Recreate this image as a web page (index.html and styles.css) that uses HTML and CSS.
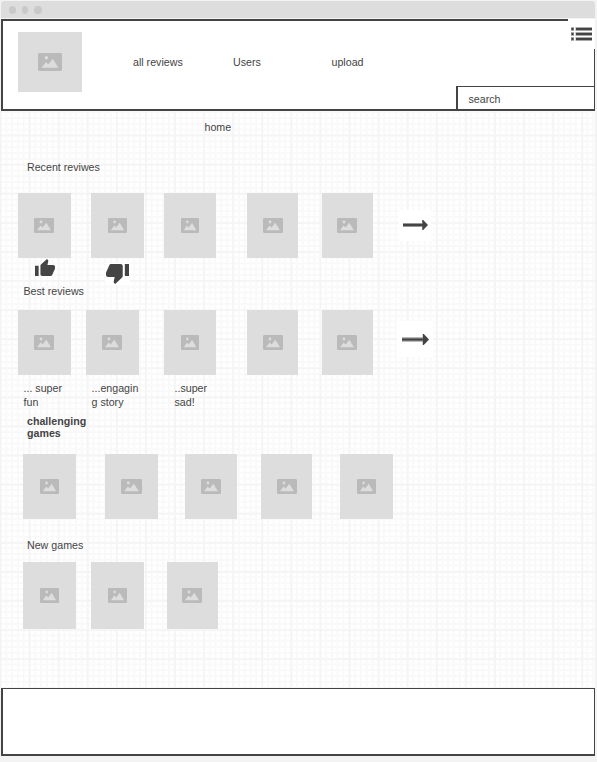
FILE: index.html
```html
<!DOCTYPE html>
<html lang="en">
<head>
<meta charset="utf-8">
<title>Game reviews</title>
<link rel="stylesheet" href="styles.css">
</head>
<body>
<svg class="defs" aria-hidden="true">
  <symbol id="pic" viewBox="0 0 20 15" preserveAspectRatio="none">
    <rect width="20" height="15" rx="1.2" fill="#bababa"/>
    <circle cx="7" cy="4" r="1.4" fill="#dddddd"/>
    <path d="M3 12.3 6.6 7.4 8.6 9.6 12.3 4.8 17 12.3z" fill="#dddddd"/>
  </symbol>
  <symbol id="thumb" viewBox="1 1 22 20" preserveAspectRatio="none">
    <path fill="#444" d="M1 21h4V9H1v12zm22-11c0-1.1-.9-2-2-2h-6.310l.95-4.570.03-.32c0-.41-.17-.79-.44-1.060L14.170 1 7.590 7.590C7.220 7.950 7 8.450 7 9v10c0 1.100.9 2 2 2h9c.83 0 1.540-.5 1.840-1.220l3.020-7.050c.09-.23.14-.47.14-.73v-2z"/>
  </symbol>
  <symbol id="arrow" viewBox="0 0 26 12" preserveAspectRatio="none">
    <path fill="#999" d="M0 4H20V8H0z"/>
    <path fill="#444" d="M0 5H20V1H21L26 6 21 11H20V7H0z"/>
  </symbol>
</svg>
<div class="window">
  <div class="titlebar"><i></i><i></i><i></i></div>
  <header class="header">
    <div class="logo"><svg><use href="#pic"/></svg></div>
    <nav class="nav"><a>all reviews</a><a>Users</a><a>upload</a></nav>
    <div class="search">search</div>
    <div class="menu">
      <svg width="21" height="14" viewBox="0 0 21 14"><path d="M0 2h3M0 7h3M0 12h3M4.500 2H21M4.500 7H21M4.500 12H21" stroke="#aaa" stroke-width="4"/><path d="M.5 2h2M.5 7h2M.5 12h2M5 2H21M5 7H21M5 12H21" stroke="#444" stroke-width="2"/></svg>
    </div>
  </header>
  <main class="canvas">
    <p class="home">home</p>
    <h2 class="title recent">Recent reviwes</h2>
    <section class="row upper">
      <div class="card i20"><svg><use href="#pic"/></svg></div>
      <div class="card i19"><svg><use href="#pic"/></svg></div>
      <div class="card mid i18"><svg><use href="#pic"/></svg></div>
      <div class="card slim i20"><svg><use href="#pic"/></svg></div>
      <div class="card slim i20 near"><svg><use href="#pic"/></svg></div>
      <div class="next"><svg><use href="#arrow"/></svg></div>
    </section>
    <div class="votes">
      <svg class="up"><use href="#thumb"/></svg>
      <div class="down"><svg><use href="#thumb"/></svg></div>
    </div>
    <h2 class="title best">Best reviews</h2>
    <section class="row lower">
      <div class="card i20"><svg><use href="#pic"/></svg></div>
      <div class="card i20"><svg><use href="#pic"/></svg></div>
      <div class="card mid i18"><svg><use href="#pic"/></svg></div>
      <div class="card slim i20"><svg><use href="#pic"/></svg></div>
      <div class="card slim i20 near"><svg><use href="#pic"/></svg></div>
      <div class="next large"><svg><use href="#arrow"/></svg></div>
    </section>
    <div class="captions"><p>... super<br>fun</p><p>...engagin<br>g story</p><p>..super<br>sad!</p></div>
    <h2 class="title challenging">challenging<br>games</h2>
    <section class="row third">
      <div class="card i19"><svg><use href="#pic"/></svg></div>
      <div class="card i21 near"><svg><use href="#pic"/></svg></div>
      <div class="card mid i20"><svg><use href="#pic"/></svg></div>
      <div class="card slim i20"><svg><use href="#pic"/></svg></div>
      <div class="card i19"><svg><use href="#pic"/></svg></div>
    </section>
    <h2 class="title new">New games</h2>
    <section class="row fourth">
      <div class="card i19"><svg><use href="#pic"/></svg></div>
      <div class="card i19"><svg><use href="#pic"/></svg></div>
      <div class="card slim i20 near"><svg><use href="#pic"/></svg></div>
    </section>
  </main>
  <footer class="footer"></footer>
</div>
</body>
</html>
```
FILE: styles.css
```css
* { box-sizing: border-box; }
body {
  margin: 0;
  height: 762px;
  overflow: hidden;
  background: #f3f3f3;
  color: #444;
  font: 10.67px/14px "Liberation Sans", Arial, sans-serif;
}
p, h2 { margin: 0; }
svg { display: block; }
.defs { position: absolute; width: 0; height: 0; }
.window { width: 594px; margin-left: 1px; padding-top: 1px; }
.titlebar {
  height: 17px;
  margin-bottom: 1px;
  padding-left: 8px;
  display: flex;
  align-items: center;
  gap: 6px;
  background: #ddd;
  border-radius: 3px 3px 0 0;
}
.titlebar i { width: 6.5px; height: 8px; border-radius: 50%; background: #c9c9c9; }
.titlebar i:last-child { width: 7.5px; }
.header {
  position: relative;
  height: 92px;
  display: flex;
  background: #fff;
  border: 2px solid #444;
  border-right-width: 1px;
}
.logo {
  width: 64px;
  height: 60px;
  margin: 11px 51px 0 15px;
  display: flex;
  align-items: center;
  justify-content: center;
  background: #ddd;
}
.logo svg { width: 24px; height: 18px; }
.nav {
  flex: 1;
  padding-top: 34px;
  display: grid;
  grid-template-columns: 100px 98.500px auto;
}
.search {
  width: 138px;
  height: 23px;
  align-self: flex-end;
  padding: 5px 0 0 10.500px;
  border-left: 2px solid #444;
  border-top: 1px solid #444;
}
.menu {
  position: absolute;
  top: -2px;
  right: -1px;
  width: 27px;
  height: 30px;
  padding: 8px 0 0 3px;
  background: #fff;
}
.canvas {
  height: 577px;
  background-color: #fff;
  background-image:
    linear-gradient(90deg, #f5f5f5 1.500px, transparent 1.500px),
    linear-gradient(#f5f5f5 1.500px, transparent 1.500px),
    linear-gradient(90deg, #f9f9f9 1.500px, transparent 1.500px),
    linear-gradient(#f9f9f9 1.500px, transparent 1.500px);
  background-size: 29.100px 29.100px, 29.100px 29.100px, 5.820px 5.820px, 5.820px 5.820px;
  background-position: -1.500px -5.500px;
  overflow: hidden;
}
.home { margin: 9px 0 0 203.500px; }
.title { font-size: inherit; font-weight: normal; }
.recent { margin: 26px 0 19px 26px; }
.row { display: grid; height: 65px; margin-left: 17px; }
.upper { grid-template-columns: 73px 73px 83px 75px 77px 32px; }
.lower { grid-template-columns: 68px 78px 83px 75px 75px 36px; }
.third { grid-template-columns: 82px 80px 76px 79px 53px; margin-left: 22px; }
.fourth { grid-template-columns: 68px 76px 51px; margin-left: 22px; height: 67px; }
.card {
  width: 53px;
  display: flex;
  align-items: center;
  justify-content: center;
  background: #ddd;
}
.mid { width: 52px; }
.slim { width: 51px; }
.card svg { height: 15px; }
.i18 svg { width: 18px; }
.i19 svg { width: 19px; }
.i20 svg { width: 20px; }
.i21 svg { width: 21px; }
.card:first-child.i20, .lower .card:nth-child(2), .near { padding-right: 1px; }
.next { height: 31px; margin-top: 17px; padding: 9px 0 0 4px; background: #fff; }
.next svg { width: 25px; height: 12px; }
.next.large { height: 36px; margin-top: 11px; padding: 12px 0 0 5px; }
.large svg { width: 27px; height: 13px; }
.votes { height: 27px; margin-left: 33.500px; display: flex; align-items: flex-start; }
.up { width: 20px; height: 17px; margin: 1px 50.500px 0 0; }
.down { background: #fff; margin-top: 5px; padding: 1px; }
.down svg { width: 23px; height: 20px; transform: rotate(180deg); }
.best { margin: -1px 0 12px 22.500px; }
.captions {
  margin: 6px 0 6px 22.500px;
  display: grid;
  grid-template-columns: 68px 83px 60px;
}
.challenging { margin: 0 0 15px 26px; font-weight: bold; line-height: 12px; }
.new { margin: 19px 0 10px 26px; }
.footer {
  height: 68px;
  background: #fff;
  border: solid #444;
  border-width: 1px 1px 2px 2px;
}
```
